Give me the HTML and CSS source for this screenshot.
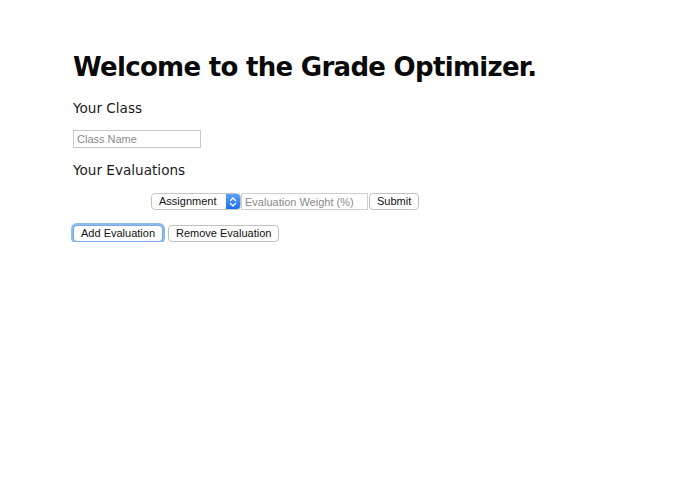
FILE: index.html
```html
<!DOCTYPE html>
<html>
<head>
<meta charset="utf-8">
<link rel="stylesheet" href="styles.css">
</head>
<body>
<main class="page">
  <h1 class="title">Welcome to the Grade Optimizer.</h1>
  <h2 class="section">Your Class</h2>
  <input class="field class-field" type="text" placeholder="Class Name">
  <h2 class="section evals">Your Evaluations</h2>
  <div class="eval-row">
    <div class="select">
      <span class="select-label">Assignment</span>
      <span class="select-arrow">
        <svg width="8" height="12" viewBox="0 0 8 12"><path d="M1.5 4.5 L4 2 L6.5 4.5" fill="none" stroke="#fff" stroke-width="1.4" stroke-linecap="round" stroke-linejoin="round"/><path d="M1.5 7.5 L4 10 L6.5 7.5" fill="none" stroke="#fff" stroke-width="1.4" stroke-linecap="round" stroke-linejoin="round"/></svg>
      </span>
    </div>
    <input class="field weight-field" type="text" placeholder="Evaluation Weight (%)">
    <button class="btn">Submit</button>
  </div>
  <div class="actions">
    <button class="btn focused">Add Evaluation</button>
    <button class="btn">Remove Evaluation</button>
  </div>
</main>
</body>
</html>
```
FILE: styles.css
```css
html, body {
  margin: 0;
  padding: 0;
  background: #fff;
}
body {
  font-family: "DejaVu Sans", "Liberation Sans", sans-serif;
  color: #111;
}
.page {
  padding: 49px 0 0 73px;
  display: flex;
  flex-direction: column;
  align-items: flex-start;
}
.title {
  margin: 0;
  font-size: 26px;
  font-weight: bold;
  line-height: 36px;
  letter-spacing: -0.7px;
  color: #0a0a0a;
}
.section {
  margin: 13px 0 0 0;
  font-size: 13.6px;
  font-weight: normal;
  line-height: 20px;
  color: #1a1a1a;
}
.evals { margin-top: 12px; }
.field {
  box-sizing: border-box;
  height: 18px;
  border: 1px solid #c8c8c8;
  padding: 0 3px;
  font-family: "Liberation Sans", sans-serif;
  font-size: 11px;
  color: #333;
  outline: none;
  margin: 0;
}
.field::placeholder { color: #8a8a8a; }
.class-field {
  width: 128px;
  margin-top: 12px;
}
.eval-row {
  display: flex;
  align-items: center;
  margin: 13px 0 0 78px;
}
.eval-row .field,
.eval-row .btn,
.select {
  height: 17px;
}
.select {
  box-sizing: border-box;
  width: 90px;
  border: 1px solid #c4c4c4;
  border-radius: 4px;
  display: flex;
  overflow: hidden;
  background: #fff;
}
.select-label {
  flex: 1;
  font-family: "Liberation Sans", sans-serif;
  font-size: 11px;
  line-height: 15px;
  padding-left: 7px;
  color: #111;
}
.select-arrow {
  width: 14px;
  background: linear-gradient(#5aa2f8, #1f6ff0);
  display: flex;
  align-items: center;
  justify-content: center;
}
.weight-field {
  width: 127px;
  border-color: #d0d0d0;
}
.btn {
  box-sizing: border-box;
  height: 17px;
  margin: 0 0 0 1px;
  padding: 0 7px;
  border: 1px solid #c0c0c0;
  border-radius: 4px;
  background: #fff;
  font-family: "Liberation Sans", sans-serif;
  font-size: 11px;
  line-height: 15px;
  color: #111;
}
.actions {
  display: flex;
  gap: 4px;
  margin-top: 15px;
}
.focused {
  margin-left: 0;
  box-shadow: 0 0 0 2px #8db8f0;
  border-color: #7aa8e8;
}
```
